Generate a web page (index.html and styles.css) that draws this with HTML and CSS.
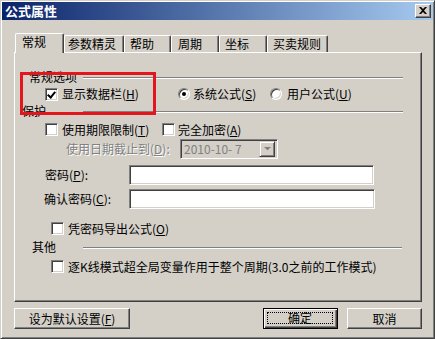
FILE: index.html
```html
<!DOCTYPE html>
<html lang="zh-CN">
<head>
<meta charset="utf-8">
<title>公式属性</title>
<link rel="stylesheet" href="styles.css">
</head>
<body>
<div class="window">
  <div class="titlebar">
    <span class="title">公式属性</span>
    <span class="close"><svg width="8" height="7" viewBox="0 0 8 7"><path d="M0 0h2l2 2 2-2h2L5 3.5 8 7H6L4 5 2 7H0l3-3.5z" fill="#000"/></svg></span>
  </div>
  <div class="body">
    <div class="tabs">
      <div class="tab sel t1">常规</div>
      <div class="tab t2">参数精灵</div>
      <div class="tab t3">帮助</div>
      <div class="tab t4">周期</div>
      <div class="tab t5">坐标</div>
      <div class="tab t6">买卖规则</div>
    </div>
    <div class="panel">
      <div class="row grp r1"><span class="glabel i1">常规选项</span><span class="gline"></span></div>
      <div class="row r2">
        <span class="chk on m30"></span><span class="txt ml4 w116">显示数据栏(<u>H</u>)</span>
        <span class="radio on"></span><span class="txt ml3 w77">系统公式(<u>S</u>)</span>
        <span class="radio"></span><span class="txt ml5">用户公式(<u>U</u>)</span>
      </div>
      <div class="row grp r3"><span class="glabel i2">保护</span><span class="gline"></span></div>
      <div class="row r4">
        <span class="chk m30"></span><span class="txt ml4 w100">使用期限限制(<u>T</u>)</span>
        <span class="chk"></span><span class="txt ml3">完全加密(<u>A</u>)</span>
      </div>
      <div class="row r5">
        <span class="txt dis m51 w114">使用日期截止到(<u>D</u>):</span>
        <span class="combo"><span class="cval">2010-10- 7</span><span class="cbtn"><svg width="7" height="4" viewBox="0 0 7 4"><path d="M1 1h5L3.5 3.5z" fill="#fff"/><path d="M0 0h7L3.5 3.5z" fill="#808080"/></svg></span></span>
      </div>
      <div class="row r6">
        <span class="txt m30 w84">密码(<u>P</u>):</span>
        <span class="input w245"></span>
      </div>
      <div class="row r7">
        <span class="txt m29 w85">确认密码(<u>C</u>):</span>
        <span class="input w246"></span>
      </div>
      <div class="row r8">
        <span class="chk m36"></span><span class="txt ml4">凭密码导出公式(<u>O</u>)</span>
      </div>
      <div class="row grp r9"><span class="glabel i3">其他</span><span class="gline g2"></span></div>
      <div class="row r10">
        <span class="chk m36"></span><span class="txt ml4">逐K线模式超全局变量作用于整个周期(3.0之前的工作模式)</span>
      </div>
    </div>
    <div class="buttons">
      <span class="btn b1">设为默认设置(<u>F</u>)</span>
      <span class="btn def b2"><span class="focus">确定</span></span>
      <span class="btn b3">取消</span>
    </div>
  </div>
  <div class="annot"></div>
</div>
</body>
</html>
```
FILE: styles.css
```css
* { box-sizing: border-box; }
html, body { margin: 0; padding: 0; background: #d4d0c8; }
body {
  font-family: "Noto Sans CJK SC", "Noto Sans", sans-serif;
  font-size: 12px;
  line-height: 14px;
  color: #000;
}
u { text-decoration: underline; text-underline-offset: 1px; }

.window {
  position: relative;
  width: 435px;
  height: 339px;
  background: #d4d0c8;
  border: 1px solid;
  border-color: #d4d0c8 #404040 #404040 #d4d0c8;
  box-shadow: inset 1px 1px #fff, inset -1px -1px #808080;
  padding: 1px;
}

.titlebar {
  height: 18px;
  background: linear-gradient(to right, #0a246a, #a6caf0);
  display: flex;
  align-items: center;
  padding-left: 3px;
  padding-right: 2px;
}
.title {
  color: #fff;
  font-weight: bold;
  font-size: 13px;
  flex: 1;
}
.close {
  width: 16px;
  height: 14px;
  background: #d4d0c8;
  border: 1px solid;
  border-color: #fff #404040 #404040 #fff;
  box-shadow: inset -1px -1px #808080;
  display: flex;
  align-items: center;
  justify-content: center;
  padding-bottom: 1px;
}

.body {
  padding: 13px 11px 0 12px;
}

.tabs {
  height: 19px;
  display: flex;
  align-items: flex-end;
}
.tab {
  height: 17px;
  border-top: 1px solid #fff;
  border-left: 1px solid #fff;
  border-right: 1px solid #404040;
  box-shadow: inset -1px 0 #808080;
  border-radius: 2px 2px 0 0;
  padding-left: 5px;
  padding-top: 1px;
  background: #d4d0c8;
  white-space: nowrap;
}
.tab.sel {
  position: relative;
  z-index: 2;
  height: 20px;
  margin-bottom: -1px;
  margin-left: 1px;
  padding-left: 6px;
  padding-top: 1px;
}
.t1 { width: 49px; }
.t2 { width: 60px; padding-left: 3px; }
.t3 { width: 47px; }
.t4 { width: 48px; padding-left: 6px; }
.t5 { width: 48px; }
.t6 { width: 61px; }

.panel {
  position: relative;
  z-index: 1;
  height: 250px;
  border: 1px solid;
  border-color: #fff #404040 #404040 #fff;
  box-shadow: inset -1px -1px #808080;
  display: flex;
  flex-direction: column;
  padding-top: 16px;
}

.row { display: flex; align-items: center; flex: none; }
.r1 { height: 16px; }
.r2 { height: 16px; margin-top: 1px; }
.r3 { height: 16px; margin-top: 1px; }
.r4 { height: 15px; margin-top: 3px; }
.r5 { height: 20px; margin-top: 2px; }
.r6 { height: 20px; margin-top: 6px; }
.r7 { height: 20px; margin-top: 4px; }
.r8 { height: 15px; margin-top: 12px; }
.r9 { height: 16px; margin-top: 3px; }
.r10 { height: 15px; margin-top: 4px; }

.glabel { width: 68px; white-space: nowrap; }
.i1 { padding-left: 14px; }
.i2 { padding-left: 7px; }
.i3 { padding-left: 17px; }
.gline {
  width: 320px;
  height: 2px;
  border-top: 1px solid #808080;
  border-bottom: 1px solid #fff;
  margin-top: 2px;
}
.gline.g2 { width: 319px; }

.txt { white-space: nowrap; }
.dis { color: #808080; text-shadow: 1px 1px 0 #fff; }
.m29 { margin-left: 29px; }
.m30 { margin-left: 30px; }
.m36 { margin-left: 36px; }
.m51 { margin-left: 51px; }
.ml3 { margin-left: 3px; }
.ml4 { margin-left: 4px; }
.ml5 { margin-left: 5px; }
.w77 { width: 77px; }
.w84 { width: 84px; }
.w85 { width: 85px; }
.w100 { width: 100px; }
.w114 { width: 114px; }
.w116 { width: 116px; }
.w245 { width: 245px; }
.w246 { width: 246px; }

.chk {
  flex: none;
  width: 13px;
  height: 13px;
  background: #fff;
  border: 1px solid;
  border-color: #808080 #fff #fff #808080;
  box-shadow: inset 1px 1px #404040, inset -1px -1px #d4d0c8;
  position: relative;
}
.chk.on::after {
  content: "";
  position: absolute;
  left: 2px;
  top: 1px;
  width: 3px;
  height: 6px;
  border-right: 2px solid #000;
  border-bottom: 2px solid #000;
  transform: translate(1px, 0) rotate(40deg);
  transform-origin: center;
}

.radio {
  flex: none;
  width: 12px;
  height: 12px;
  border-radius: 50%;
  background: #fff;
  border: 1px solid;
  border-color: #808080 #fff #fff #808080;
  box-shadow: inset 1px 1px #404040, inset -1px -1px #d4d0c8;
  position: relative;
}
.radio.on::after {
  content: "";
  position: absolute;
  left: 3px;
  top: 3px;
  width: 4px;
  height: 4px;
  border-radius: 50%;
  background: #000;
}

.combo {
  width: 98px;
  height: 20px;
  background: #d4d0c8;
  border: 1px solid;
  border-color: #808080 #fff #fff #808080;
  box-shadow: inset 1px 1px #404040, inset -1px -1px #d4d0c8;
  display: flex;
  align-items: center;
  padding: 2px;
}
.cval {
  flex: 1;
  color: #808080;
  padding-left: 1px;
  font-size: 12px;
}
.cbtn {
  width: 16px;
  height: 16px;
  background: #d4d0c8;
  border: 1px solid;
  border-color: #d4d0c8 #404040 #404040 #d4d0c8;
  box-shadow: inset 1px 1px #fff, inset -1px -1px #808080;
  display: flex;
  align-items: center;
  justify-content: center;
}

.input {
  height: 20px;
  background: #fff;
  border: 1px solid;
  border-color: #808080 #fff #fff #808080;
  box-shadow: inset 1px 1px #404040, inset -1px -1px #d4d0c8;
}

.buttons {
  display: flex;
  margin-top: 6px;
  height: 21px;
}
.btn {
  height: 21px;
  background: #d4d0c8;
  border: 1px solid;
  border-color: #fff #404040 #404040 #fff;
  box-shadow: inset -1px -1px #808080;
  display: flex;
  align-items: center;
  justify-content: center;
  white-space: nowrap;
}
.b1 { width: 116px; }
.b2 { width: 75px; margin-left: auto; }
.b3 { width: 75px; margin-left: 9px; }
.btn.def {
  border: 1px solid #000;
  box-shadow: inset 1px 1px #fff, inset -1px -1px #404040, inset -2px -2px #808080;
  padding: 3px 4px 4px 3px;
}
.focus {
  width: 100%;
  height: 100%;
  border: 1px dotted #000;
  display: flex;
  align-items: center;
  justify-content: center;
}

.annot {
  position: absolute;
  left: 19px;
  top: 71px;
  width: 136px;
  height: 43px;
  border: 3px solid #e3161d;
  z-index: 5;
  pointer-events: none;
}
```
